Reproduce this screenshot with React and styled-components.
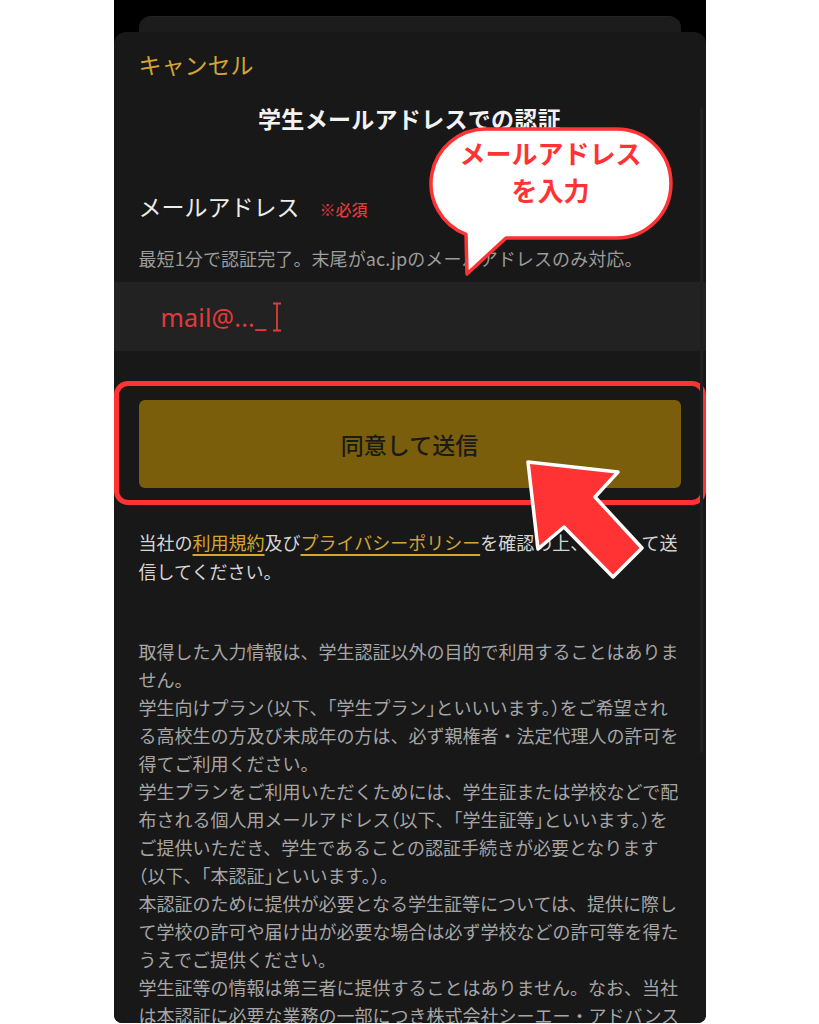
import React from 'react'
import styled, { createGlobalStyle } from 'styled-components'

const GlobalStyle = createGlobalStyle`
    html, body {
        margin: 0;
        padding: 0;
        background: #ffffff;
    }
    body {
        font-family: "Noto Sans CJK JP", "Noto Sans", sans-serif;
    }
`

const Page = styled.div`
    width: 819px;
    height: 1024px;
    display: flex;
    justify-content: center;
    background: #ffffff;
`

const Phone = styled.div`
    position: relative;
    width: 592px;
    height: 1023px;
    background: #000000;
    border-radius: 0 0 8px 8px;
    overflow: hidden;
    display: flex;
    flex-direction: column;
`

const BackCard = styled.div`
    flex: none;
    height: 16px;
    margin: 16px 25px 0;
    background: #1c1c1c;
    border-radius: 12px 12px 0 0;
    border-top: 1px solid #232323;
    box-sizing: border-box;
`

const Sheet = styled.div`
    flex: 1;
    min-height: 0;
    background: #181818;
    border-radius: 12px 12px 8px 8px;
    overflow: hidden;
`

const Section = styled.div`
    padding: 0 25px;
    margin-top: ${p => p.top || 0}px;
`

const Cancel = styled.div`
    padding: 17px 25px 0;
    font-size: 23px;
    line-height: 30px;
    color: #d4a531;
`

const Title = styled.div`
    margin-top: 23px;
    text-align: center;
    font-size: 23px;
    line-height: 32px;
    font-weight: 700;
    color: #f2f2f2;
    letter-spacing: 0.3px;
`

const LabelRow = styled.div`
    display: flex;
    align-items: baseline;
    gap: 20px;
    line-height: 34px;
`

const Label = styled.span`
    font-size: 23px;
    color: #ececec;
`

const Required = styled.span`
    font-size: 16px;
    color: #e23a3e;
    font-weight: 500;
`

const Help = styled.div`
    font-size: 18px;
    line-height: 26px;
    color: #9c9c9c;
    white-space: nowrap;
    letter-spacing: 0.1px;
`

const InputRow = styled.div`
    margin-top: 11px;
    height: 69px;
    background: #222222;
    display: flex;
    align-items: center;
    padding-left: 47px;
    gap: 6px;
`

const Typed = styled.span`
    font-family: "Noto Sans", sans-serif;
    font-size: 25px;
    color: #e23a3a;
    letter-spacing: 0.2px;
`

const Highlight = styled.div`
    margin-top: 30px;
    height: 124px;
    box-sizing: border-box;
    border: 5px solid #ff3333;
    border-radius: 14px;
    padding: 14px 20px 0;
`

const SubmitButton = styled.div`
    height: 88px;
    border-radius: 6px;
    background: #7a5e0b;
    display: flex;
    align-items: center;
    justify-content: center;
    font-size: 23px;
    font-weight: 500;
    color: #1a1a1a;
`

const Terms = styled.div`
    font-size: 18px;
    line-height: 29px;
    color: #d6d6d6;
    white-space: nowrap;
`

const TermLink = styled.span`
    color: #d4a531;
    text-decoration: underline;
    text-decoration-thickness: 1.5px;
    text-underline-offset: 4px;
`

const Body = styled.div`
    font-size: 18px;
    line-height: 28px;
    color: #a6a6a6;
`

const Line = styled.div`
    white-space: nowrap;
`

const Half = styled.span`
    font-feature-settings: "halt";
`

const Bubble = styled.div`
    position: absolute;
    left: 313px;
    top: 125px;
    width: 250px;
    height: 155px;
`

const BubbleText = styled.div`
    position: absolute;
    left: 4px;
    top: 9px;
    width: 240px;
    text-align: center;
    font-size: 26px;
    line-height: 37px;
    font-weight: 700;
    color: #ff3333;
`

const Pointer = styled.svg`
    position: absolute;
    left: 402px;
    top: 450px;
`

const ScrollBar = styled.div`
    position: absolute;
    left: 586px;
    top: 107px;
    width: 3px;
    height: 646px;
    border-radius: 2px;
    background: #202020;
`

const bodyLines = [
    '取得した入力情報は、学生認証以外の目的で利用することはありま',
    'せん。',
    '学生向けプラン（以下、「学生プラン」といいいます。）をご希望され',
    'る高校生の方及び未成年の方は、必ず親権者・法定代理人の許可を',
    '得てご利用ください。',
    '学生プランをご利用いただくためには、学生証または学校などで配',
    '布される個人用メールアドレス（以下、「学生証等」といいます。）を',
    'ご提供いただき、学生であることの認証手続きが必要となります',
    '（以下、「本認証」といいます。）。',
    '本認証のために提供が必要となる学生証等については、提供に際し',
    'て学校の許可や届け出が必要な場合は必ず学校などの許可等を得た',
    'うえでご提供ください。',
    '学生証等の情報は第三者に提供することはありません。なお、当社',
    'は本認証に必要な業務の一部につき株式会社シーエー・アドバンス',
]

const renderLine = (text) =>
    text.split(/([（）「」])/).map((part, i) =>
        /[（）「」]/.test(part) ? <Half key={i}>{part}</Half> : part
    )

const Cursor = () => (
    <svg width="10" height="30" viewBox="0 0 10 30">
        <path d="M1 1.5 H9 M5 1.5 V28.5 M1 28.5 H9" stroke="#e23a3a" strokeWidth="1.8" fill="none" />
    </svg>
)

const App = () => {
    return (
        <Page>
            <GlobalStyle />
            <Phone>
                <BackCard />
                <Sheet>
                    <Cancel>キャンセル</Cancel>
                    <Title>学生メールアドレスでの認証</Title>
                    <Section top={55}>
                        <LabelRow>
                            <Label>メールアドレス</Label>
                            <Required>※必須</Required>
                        </LabelRow>
                    </Section>
                    <Section top={19}>
                        <Help>最短1分で認証完了。末尾がac.jpのメールアドレスのみ対応。</Help>
                    </Section>
                    <InputRow>
                        <Typed>mail@..._</Typed>
                        <Cursor />
                    </InputRow>
                    <Highlight>
                        <SubmitButton>同意して送信</SubmitButton>
                    </Highlight>
                    <Section top={23}>
                        <Terms>
                            当社の<TermLink>利用規約</TermLink>及び<TermLink>プライバシーポリシー</TermLink>を確認の上、同意して送<br />
                            信してください。
                        </Terms>
                    </Section>
                    <Section top={51}>
                        <Body>
                            {bodyLines.map((l, i) => <Line key={i}>{renderLine(l)}</Line>)}
                        </Body>
                    </Section>
                </Sheet>
                <ScrollBar />
                <Bubble>
                    <svg width="250" height="155" viewBox="0 0 250 155">
                        <path
                            d="M58.5 4 H189.5 A54.5 54.5 0 0 1 189.5 113 H79 L40 149 L39 109.4 A54.5 54.5 0 0 1 58.5 4 Z"
                            fill="#ffffff"
                            stroke="#ff3333"
                            strokeWidth="3.5"
                            strokeLinejoin="round"
                        />
                    </svg>
                    <BubbleText>メールアドレス<br />を入力</BubbleText>
                </Bubble>
                <Pointer width="140" height="140" viewBox="0 0 140 140">
                    <polygon
                        points="12,12 102,22 79,47 126,98 97,127 48,77 22,99"
                        fill="#ff3333"
                        stroke="#ffffff"
                        strokeWidth="3.5"
                        strokeLinejoin="round"
                    />
                </Pointer>
            </Phone>
        </Page>
    )
}

export default App
